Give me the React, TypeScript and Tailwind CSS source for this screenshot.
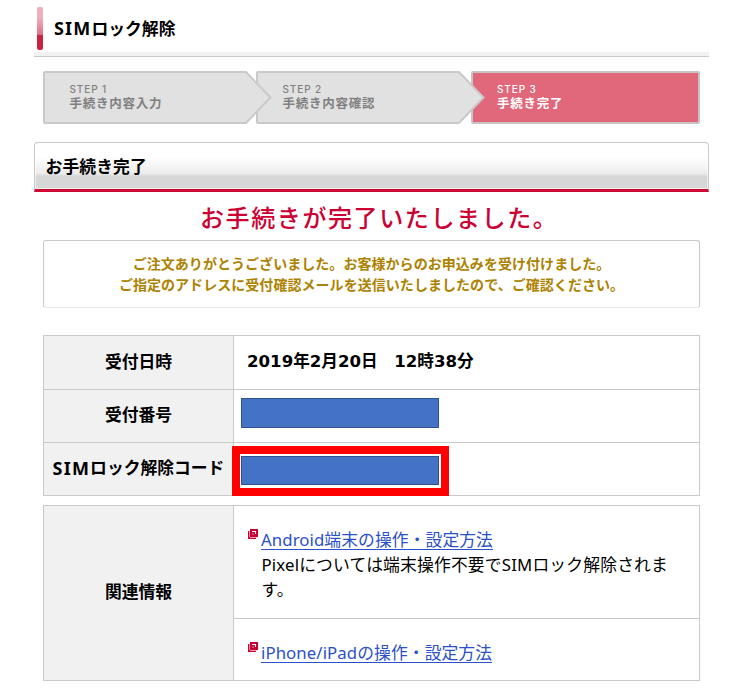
import type { ReactNode } from 'react';

interface StepProps {
    step: string;
    label: string;
    className: string;
    active?: boolean;
}

function Step({ step, label, className, active = false }: StepProps) {
    return (
        <div className={`relative pl-[26.5px] ${className}`}>
            <svg className="absolute left-0 top-0 overflow-visible" width="229" height="53" viewBox="0 0 229 53">
                {active ? (
                    <rect x="1" y="1" width="227" height="51" rx="1" fill="#e1677b" stroke="#c9c4c4" strokeWidth="2" />
                ) : (
                    <path d="M2 1H203L227.5 26.5L203 52H2Q1 52 1 51V2Q1 1 2 1Z" fill="#e1e1e1" stroke="#c9c9c9" strokeWidth="2" />
                )}
            </svg>
            <p className="relative mt-[11px] text-[10px] leading-[14px] font-medium tracking-[0.9px]">{step}</p>
            <p className="relative mt-px text-[12.5px] leading-[14px] font-bold tracking-[0.75px]">{label}</p>
        </div>
    );
}

function HeaderCell({ children }: { children: ReactNode }) {
    return (
        <div className="flex w-[190px] shrink-0 items-center justify-center border-r border-[#c9c9c9] bg-[#f1f1f1] pb-[2px] font-bold whitespace-nowrap">
            {children}
        </div>
    );
}

function WindowIcon() {
    return (
        <svg className="mt-[-1px] mr-[3px] shrink-0" width="10" height="10" viewBox="0 0 10 10" shapeRendering="crispEdges">
            <path d="M0 2H2V8H8V10H0Z" fill="#c03" />
            <path d="M1 2H2V8H1Z M2 8H8V9H2Z" fill="#e9a0b3" />
            <path d="M2 0H10V8H2Z" fill="#c03" />
            <path d="M4 2H8V5H7V3H4Z" fill="#fff" />
            <path d="M4 4H6V6H4Z" fill="#d63f64" />
        </svg>
    );
}

function HelpLink({ children }: { children: ReactNode }) {
    return (
        <div className="flex">
            <WindowIcon />
            <a href="#" className="h-[20px] border-b border-[#2b50c8] leading-[20px] tracking-[0.08px] text-[#2b50c8] whitespace-nowrap">
                {children}
            </a>
        </div>
    );
}

export default function App() {
    return (
        <main className="h-[694px] w-[752px] overflow-hidden bg-white pl-[34px] font-['Noto_Sans','Noto_Sans_CJK_JP',sans-serif] text-[16.8px] text-black">
            <header className="flex h-[57px] w-[675px] border-b border-[#c9c9c9] bg-linear-to-b from-white from-[52px] to-[#f1f1f1] to-[52px] pt-[7px] pl-[3px]">
                <span className="h-[43px] w-[6px] rounded-xs bg-linear-to-b from-[#eeb0bb] from-25% via-[#dd7188] via-64% to-[#c9233f] to-65%" />
                <h1 className="ml-[11px] pt-[9px] leading-[24px] font-bold">
                    <span className="text-[18px] tracking-[1.2px]">SIM</span>ロック解除
                </h1>
            </header>

            <div className="mt-[14px] ml-[9px] flex h-[53px] font-['Inter','Noto_Sans_CJK_JP',sans-serif]">
                <Step step="STEP 1" label="手続き内容入力" className="z-20 w-[213px] text-[#808080]" />
                <Step step="STEP 2" label="手続き内容確認" className="z-10 w-[214.5px] text-[#808080]" />
                <Step step="STEP 3" label="手続き完了" className="w-[229px] text-white" active />
            </div>

            <div className="mt-[18px] h-[50px] w-[675px] rounded-t-sm border border-b-[3px] border-[#c9c9c9] border-b-[#ce0b32] bg-linear-to-b from-white from-30% via-[#ececec] via-66% to-[#d7d7d7] to-72% pt-[12px] pl-[10.5px] shadow-[inset_0_0_0_1px_#fff9]">
                <h2 className="leading-[24px] font-bold tracking-[0.1px]">お手続き完了</h2>
            </div>

            <div className="ml-[9px] w-[657px]">
                <p className="h-[48px] pt-[7px] pl-[157px] font-['Noto_Sans_CJK_JP',sans-serif] text-[24px] leading-[36px] font-medium tracking-[1.6px] text-[#c03]">
                    お手続きが完了いたしました。
                </p>
                <div className="h-[68px] rounded-[3px] border border-[#c9c9c9] border-b-[#e8e8e8] pt-[12px] text-center text-[14px] leading-[21px] font-bold tracking-[0.05px] text-[#ad8200]">
                    <p>ご注文ありがとうございました。お客様からのお申込みを受け付けました。</p>
                    <p>ご指定のアドレスに受付確認メールを送信いたしましたので、ご確認ください。</p>
                </div>

                <section className="mt-[27px] border border-[#c9c9c9]">
                    <div className="flex h-[54px] border-b border-[#c9c9c9]">
                        <HeaderCell>受付日時</HeaderCell>
                        <div className="flex items-center pl-[13px] font-['DejaVu_Sans','Noto_Sans_CJK_JP',sans-serif] text-[16.6px] font-bold whitespace-nowrap">
                            2019年2月20日　12時38分
                        </div>
                    </div>
                    <div className="flex h-[53px] border-b border-[#c9c9c9]">
                        <HeaderCell>受付番号</HeaderCell>
                        <div className="mt-[8px] ml-[7px] h-[30px] w-[198px] border border-[#2f528f] bg-[#4472c4]" />
                    </div>
                    <div className="relative flex h-[52px]">
                        <HeaderCell>
                            <span className="text-[18px] tracking-[1.2px]">SIM</span>ロック解除コード
                        </HeaderCell>
                        <div className="absolute top-[3px] left-[188px] h-[50px] w-[217px] border-8 border-[#f00] bg-white pt-[2px] pl-px">
                            <div className="h-[29px] w-[198px] border border-[#2f528f] bg-[#4472c4]" />
                        </div>
                    </div>
                </section>

                <section className="mt-[9px] flex border border-[#c9c9c9]">
                    <HeaderCell>関連情報</HeaderCell>
                    <div className="flex-1">
                        <div className="h-[113px] border-b border-[#c9c9c9] pt-[24px] pl-[14px]">
                            <HelpLink>Android端末の操作・設定方法</HelpLink>
                            <p className="mt-[2px] w-[425px] pl-[13.5px] leading-[25px] tracking-[0.17px]">
                                Pixelについては端末操作不要でSIMロック解除されます。
                            </p>
                        </div>
                        <div className="h-[61px] pt-[24px] pl-[14px]">
                            <HelpLink>iPhone/iPadの操作・設定方法</HelpLink>
                        </div>
                    </div>
                </section>
            </div>
        </main>
    );
}
